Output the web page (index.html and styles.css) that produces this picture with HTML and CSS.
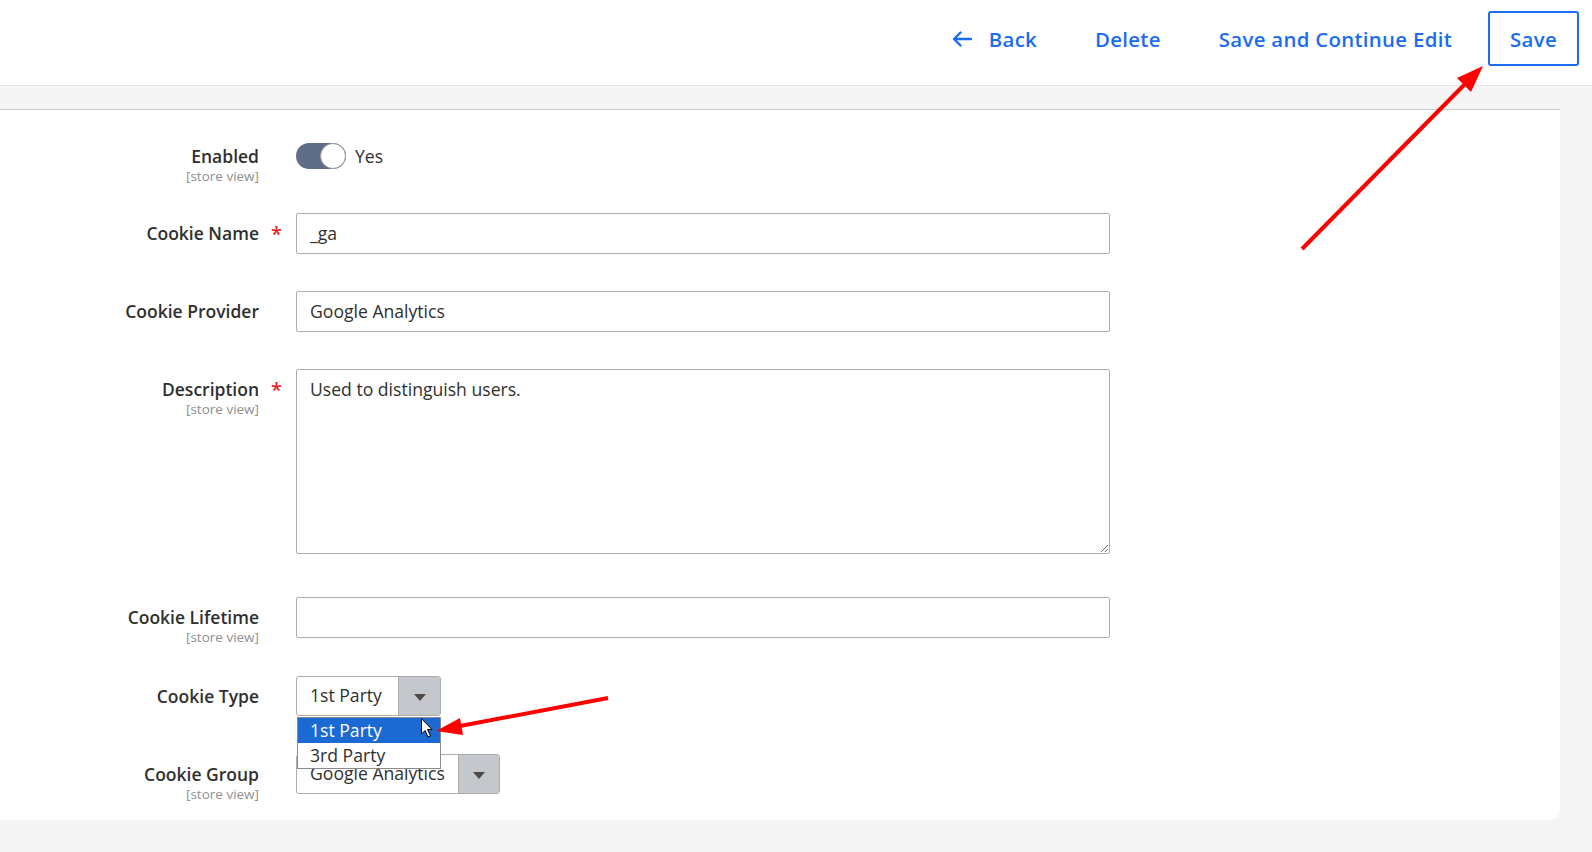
FILE: index.html
```html
<!DOCTYPE html>
<html lang="en">
<head>
<meta charset="utf-8">
<title>Cookie</title>
<link rel="stylesheet" href="styles.css">
</head>
<body>
<header class="page-actions">
  <button class="action action-back" type="button">
    <svg class="back-icon" width="20" height="16" viewBox="0 0 20 16" aria-hidden="true"><path d="M19 8H2.5M8.5 1.5L2 8l6.5 6.5" fill="none" stroke="currentColor" stroke-width="2.4" stroke-linecap="round" stroke-linejoin="round"/></svg>
    <span>Back</span>
  </button>
  <button class="action" type="button">Delete</button>
  <button class="action" type="button">Save and Continue Edit</button>
  <button class="action action-primary" type="button">Save</button>
</header>
<div class="strip"></div>
<main class="card">
  <div class="field field-enabled">
    <div class="label"><span class="label-text">Enabled</span><span class="scope">[store view]</span></div>
    <div class="req"></div>
    <div class="control toggle-control">
      <span class="toggle"><span class="knob"></span></span>
      <span class="toggle-text">Yes</span>
    </div>
  </div>
  <div class="field field-name">
    <div class="label pad"><span class="label-text">Cookie Name</span></div>
    <div class="req pad">*</div>
    <div class="control"><input class="input" type="text" value="_ga"></div>
  </div>
  <div class="field field-provider">
    <div class="label pad"><span class="label-text">Cookie Provider</span></div>
    <div class="req"></div>
    <div class="control"><input class="input" type="text" value="Google Analytics"></div>
  </div>
  <div class="field field-desc">
    <div class="label pad"><span class="label-text">Description</span><span class="scope">[store view]</span></div>
    <div class="req pad">*</div>
    <div class="control"><textarea class="textarea">Used to distinguish users.</textarea></div>
  </div>
  <div class="field field-lifetime">
    <div class="label pad"><span class="label-text">Cookie Lifetime</span><span class="scope">[store view]</span></div>
    <div class="req"></div>
    <div class="control"><input class="input" type="text" value=""></div>
  </div>
  <div class="field field-type">
    <div class="label pad"><span class="label-text">Cookie Type</span></div>
    <div class="req"></div>
    <div class="control">
      <div class="select select-type">
        <span class="select-value">1st Party</span>
        <span class="select-arrow"><span class="tri"></span></span>
      </div>
      <ul class="dropdown">
        <li class="opt opt-active">1st Party</li>
        <li class="opt">3rd Party</li>
      </ul>
    </div>
  </div>
  <div class="field field-group">
    <div class="label pad"><span class="label-text">Cookie Group</span><span class="scope">[store view]</span></div>
    <div class="req"></div>
    <div class="control">
      <div class="select select-group">
        <span class="select-value">Google Analytics</span>
        <span class="select-arrow"><span class="tri"></span></span>
      </div>
    </div>
  </div>
</main>
<svg class="annotations" width="1592" height="852" viewBox="0 0 1592 852" aria-hidden="true">
  <line x1="1302" y1="249" x2="1465" y2="84" stroke="#f00" stroke-width="4"/>
  <polygon points="1483,66 1471,92 1457,78" fill="#f00"/>
  <line x1="608" y1="698" x2="460" y2="726" stroke="#f00" stroke-width="4"/>
  <polygon points="436,731 460,718 463,735" fill="#f00"/>
  <path d="M421.5 718.5 L421.5 734 L425 730.5 L428 737 L430.5 736 L427.5 729.5 L432 729.5 Z" fill="#fff" stroke="#000" stroke-width="1" stroke-linejoin="round"/>
</svg>
</body>
</html>
```

FILE: styles.css
```css
html, body {
  margin: 0;
  padding: 0;
}
body {
  background: #f5f5f5;
  font-family: "Open Sans", "Liberation Sans", sans-serif;
  color: #303030;
  width: 1592px;
  height: 852px;
  overflow: hidden;
  position: relative;
}
.page-actions {
  height: 74px;
  background: #fff;
  border-bottom: 1px solid #e3e3e3;
  display: flex;
  justify-content: flex-end;
  align-items: flex-start;
  gap: 14px;
  padding: 11px 13px 0 0;
  box-sizing: content-box;
}
.action {
  height: 55px;
  padding: 0 22px;
  border: 0;
  background: transparent;
  color: #1a6cf0;
  font-family: "Open Sans", "Liberation Sans", sans-serif;
  font-size: 20.4px;
  font-weight: 600;
  letter-spacing: 0.3px;
  display: flex;
  align-items: center;
  cursor: pointer;
}
.action-back {
  gap: 17px;
}
.back-icon {
  display: block;
  margin-top: 1px;
}
.action-primary {
  border: 2px solid #1a6cf0;
  border-radius: 3px;
  padding: 0 21px;
  width: 91px;
  justify-content: center;
}
.strip {
  height: 23px;
}
.card {
  width: 1560px;
  background: #fff;
  border-top: 1px solid #cccccc;
  border-radius: 0 0 10px 0;
  padding: 33px 0 18px;
  box-sizing: border-box;
  height: 711px;
}
.field {
  display: grid;
  grid-template-columns: 259px 37px 814px;
  align-items: start;
}
.field-enabled { margin-bottom: 29px; }
.field-name { margin-bottom: 37px; }
.field-provider { margin-bottom: 37px; }
.field-desc { margin-bottom: 43px; }
.field-lifetime { margin-bottom: 31px; }
.field-type { margin-bottom: 38px; }
.label {
  display: flex;
  flex-direction: column;
  align-items: flex-end;
  text-align: right;
  padding-top: 1px;
}
.label.pad { padding-top: 8px; }
.label-text {
  font-size: 17.5px;
  line-height: 24px;
  font-weight: 600;
  color: #303030;
}
.scope {
  font-size: 13.5px;
  line-height: 16px;
  color: #8f8f8f;
}
.req {
  color: #e22626;
  font-size: 20px;
  line-height: 24px;
  padding-left: 12px;
  font-weight: 600;
}
.req.pad { padding-top: 9px; }
.control {
  position: relative;
}
.toggle-control {
  display: flex;
  align-items: center;
  gap: 9px;
}
.toggle {
  width: 50px;
  height: 26px;
  border-radius: 13px;
  background: #5f6e87;
  position: relative;
  display: block;
}
.knob {
  position: absolute;
  right: 0;
  top: 0;
  width: 24px;
  height: 24px;
  border-radius: 50%;
  background: #fff;
  border: 1px solid #9a9a9a;
}
.toggle-text {
  font-size: 17.6px;
  line-height: 26px;
}
.input, .textarea {
  display: block;
  width: 814px;
  box-sizing: border-box;
  border: 1px solid #adadad;
  border-radius: 2px;
  font-family: "Open Sans", "Liberation Sans", sans-serif;
  font-size: 17.6px;
  color: #303030;
  padding: 0 13px;
  margin: 0;
  background: #fff;
  outline: none;
}
.input {
  height: 41px;
  padding-bottom: 1px;
}
.textarea {
  height: 185px;
  padding-top: 6px;
  line-height: 26px;
  resize: vertical;
}
.select {
  display: flex;
  height: 40px;
  box-sizing: border-box;
  border: 1px solid #adadad;
  border-radius: 3px;
  background: #fff;
  overflow: hidden;
}
.select-type { width: 145px; }
.select-group { width: 204px; }
.select-value {
  flex: 1;
  padding-left: 13px;
  font-size: 17.6px;
  line-height: 37px;
  color: #303030;
  white-space: nowrap;
}
.select-arrow {
  width: 41px;
  background: #c4c7cc;
  border-left: 1px solid #adadad;
  display: flex;
  align-items: center;
  justify-content: center;
}
.select-group .select-arrow { width: 40px; }
.tri {
  width: 0;
  height: 0;
  border-left: 6px solid transparent;
  border-right: 6px solid transparent;
  border-top: 7px solid #514943;
  margin-top: 2px;
}
.dropdown {
  position: absolute;
  left: 1px;
  top: 41px;
  width: 144px;
  margin: 0;
  padding: 0;
  list-style: none;
  background: #fff;
  border: 1px solid #8a8a8a;
  box-sizing: border-box;
  z-index: 2;
}
.opt {
  height: 25px;
  line-height: 25px;
  font-size: 17.6px;
  padding-left: 12px;
  color: #303030;
}
.opt-active {
  background: #1b69d3;
  color: #fff;
}
.annotations {
  position: absolute;
  left: 0;
  top: 0;
  pointer-events: none;
  z-index: 5;
}
```
